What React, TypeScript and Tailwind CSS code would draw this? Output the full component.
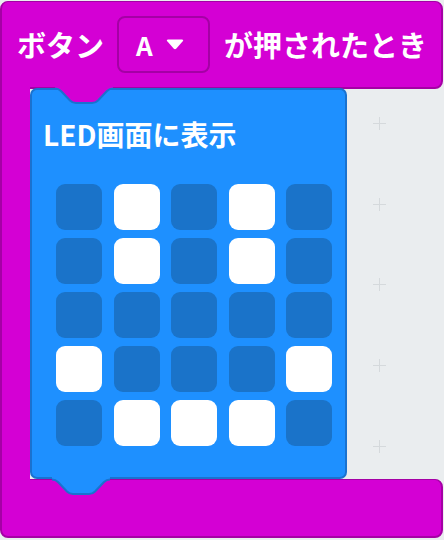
import React from "react";

const MAGENTA = "#d400d4";

const leds = [
  [0, 1, 0, 1, 0],
  [0, 1, 0, 1, 0],
  [0, 0, 0, 0, 0],
  [1, 0, 0, 0, 1],
  [0, 1, 1, 1, 0],
];

const notch =
  "M0 0 C3 0 4.5 1 6 2.5 L15 12 C17 14 18.5 14.5 21 14.5 L37 14.5 C39.5 14.5 41 14 43 12 L52 2.5 C53.5 1 55 0 58 0";

const Plus = () => (
  <svg width="13" height="13" viewBox="0 0 13 13">
    <path d="M6.5 0 V13 M0 6.5 H13" stroke="#d5d9dc" strokeWidth="1" />
  </svg>
);

export default function App() {
  return (
    <div className="w-[444px] h-[540px] bg-[#eaedef] pt-[1px] pr-[1px] flex flex-col font-['Noto_Sans_CJK_JP',sans-serif] text-white font-bold overflow-hidden">
      {/* hat row */}
      <div className="h-[88px] shrink-0 bg-[#d400d4] rounded-t-[8px] rounded-br-[8px] border-2 border-t border-[#a500a5] flex items-center pl-[15px]">
        <span className="text-[29px] leading-none">ボタン</span>
        <div className="ml-[13px] w-[93px] h-[57px] shrink-0 border-2 border-[#a500a5] rounded-[8px] flex items-center pl-[17px]">
          <span className="text-[26px] leading-none">A</span>
          <svg className="ml-[13px]" width="18" height="11" viewBox="0 0 18 11">
            <path
              d="M2 0.5 L16 0.5 Q18 0.5 16.7 2.2 L10.4 9.6 Q9 11 7.6 9.6 L1.3 2.2 Q0 0.5 2 0.5 Z"
              fill="#fff"
            />
          </svg>
        </div>
        <span className="ml-[14px] text-[29px] leading-none whitespace-nowrap">が押されたとき</span>
      </div>

      {/* statement row */}
      <div className="relative z-10 -mt-[2px] h-[393px] shrink-0 flex">
        <div className="w-[30px] bg-[#d400d4] border-l-2 border-[#a500a5]" />
        <div className="relative mt-[1px] w-[317px] h-[391px] bg-[#1e90ff] border-2 border-[#1a72cf] rounded-[7px] pl-[11px]">
          <svg
            className="absolute left-[23px] -top-[4px]"
            width="58"
            height="19"
            viewBox="0 -2.5 58 19"
          >
            <path d={notch + " L58 -2.5 L0 -2.5 Z"} fill={MAGENTA} />
            <path d={notch} fill="none" stroke="#1a72cf" strokeWidth="2" />
          </svg>
          <div className="mt-[30px] text-[28px] leading-[28px]">LED画面に表示</div>
          <div className="mt-[36px] ml-[13px] grid grid-cols-[repeat(5,46px)] gap-x-[11.5px] gap-y-[8px]">
            {leds.flat().map((on, i) => (
              <div
                key={i}
                className={
                  on
                    ? "h-[46px] rounded-[9px] bg-white"
                    : "h-[46px] rounded-[9px] bg-[#1a73c9]"
                }
              />
            ))}
          </div>
          <svg
            className="absolute left-[20px] top-[calc(100%-0.5px)]"
            width="58"
            height="19"
            viewBox="0 -2.5 58 19"
          >
            <path d={notch + " L58 -2.5 L0 -2.5 Z"} fill="#1e90ff" />
            <path d={notch} fill="none" stroke="#1a72cf" strokeWidth="2" />
          </svg>
        </div>
        <div className="flex-1 flex flex-col pl-[26px] pt-[30px] gap-[67.7px]">
          <Plus />
          <Plus />
          <Plus />
          <Plus />
          <Plus />
        </div>
      </div>

      {/* bottom arm */}
      <div className="-mt-[1px] h-[59px] shrink-0 bg-[#d400d4] rounded-b-[8px] rounded-tr-[8px] border-2 border-t border-[#a500a5]" />
    </div>
  );
}
